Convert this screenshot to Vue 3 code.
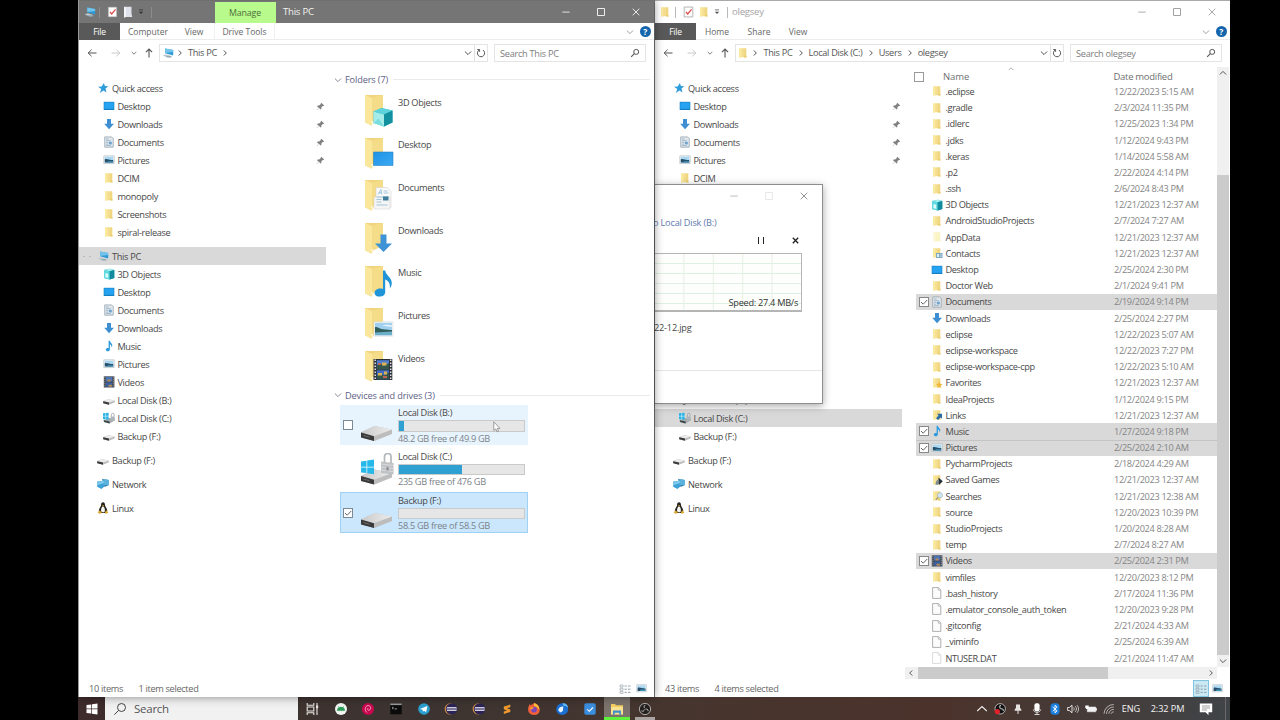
<script setup>
import { h } from 'vue'

const Ic = (p) =>
  h('svg', { 'aria-hidden': 'true' }, [h('use', { href: '#' + p.n, width: '100%', height: '100%' })])
Ic.props = ['n']

const navGroups = [
  [
    { t: 'Quick access', i: 'star', d: 0 },
    { t: 'Desktop', i: 'desktop', d: 1, pin: true },
    { t: 'Downloads', i: 'down', d: 1, pin: true },
    { t: 'Documents', i: 'doc', d: 1, pin: true },
    { t: 'Pictures', i: 'pic', d: 1, pin: true },
    { t: 'DCIM', i: 'folder', d: 1 },
    { t: 'monopoly', i: 'folder', d: 1 },
    { t: 'Screenshots', i: 'folder', d: 1 },
    { t: 'spiral-release', i: 'folder', d: 1 }
  ],
  [
    { t: 'This PC', i: 'pc', d: 0 },
    { t: '3D Objects', i: 'cube', d: 1 },
    { t: 'Desktop', i: 'desktop', d: 1 },
    { t: 'Documents', i: 'doc', d: 1 },
    { t: 'Downloads', i: 'down', d: 1 },
    { t: 'Music', i: 'music', d: 1 },
    { t: 'Pictures', i: 'pic', d: 1 },
    { t: 'Videos', i: 'video', d: 1 },
    { t: 'Local Disk (B:)', i: 'disk', d: 1 },
    { t: 'Local Disk (C:)', i: 'diskc', d: 1 },
    { t: 'Backup (F:)', i: 'disk', d: 1 }
  ],
  [{ t: 'Backup (F:)', i: 'disk', d: 0 }],
  [{ t: 'Network', i: 'net', d: 0 }],
  [{ t: 'Linux', i: 'tux', d: 0 }]
]

const windows = [
  {
    id: 'pc', title: 'This PC', active: true, icon: 'pc', quick: 'page',
    tabs: ['Computer', 'View'], crumbs: ['This PC'], search: 'Search This PC',
    selected: 'This PC', count: '10 items', picked: '1 item selected'
  },
  {
    id: 'user', title: 'olegsey', active: false, icon: 'folder', quick: 'folder',
    tabs: ['Home', 'Share', 'View'], crumbs: ['This PC', 'Local Disk (C:)', 'Users', 'olegsey'],
    search: 'Search olegsey', selected: 'Local Disk (C:)', count: '43 items', picked: '4 items selected'
  }
]

const folders = [
  ['3D Objects', 'b-cube'], ['Desktop', 'b-desktop'], ['Documents', 'b-doc'], ['Downloads', 'b-down'],
  ['Music', 'b-music'], ['Pictures', 'b-pic'], ['Videos', 'b-video']
]

const drives = [
  { t: 'Local Disk (B:)', s: '48.2 GB free of 49.9 GB', used: 4, i: 'b-disk', state: 'hover' },
  { t: 'Local Disk (C:)', s: '235 GB free of 476 GB', used: 50.6, i: 'b-diskc', state: '' },
  { t: 'Backup (F:)', s: '58.5 GB free of 58.5 GB', used: 0, i: 'b-disk', state: 'sel' }
]

const files = [
  ['.eclipse', 'folder', '12/22/2023 5:15 AM'],
  ['.gradle', 'folder', '2/3/2024 11:35 PM'],
  ['.idlerc', 'folder', '12/25/2023 1:34 PM'],
  ['.jdks', 'folder', '1/12/2024 9:43 PM'],
  ['.keras', 'folder', '1/14/2024 5:58 AM'],
  ['.p2', 'folder', '2/22/2024 4:14 PM'],
  ['.ssh', 'folder', '2/6/2024 8:43 PM'],
  ['3D Objects', 'cube', '12/21/2023 12:37 AM'],
  ['AndroidStudioProjects', 'folder', '2/7/2024 7:27 AM'],
  ['AppData', 'faded', '12/21/2023 12:37 AM'],
  ['Contacts', 'contacts', '12/21/2023 12:37 AM'],
  ['Desktop', 'desktop', '2/25/2024 2:30 PM'],
  ['Doctor Web', 'folder', '2/1/2024 9:41 PM'],
  ['Documents', 'doc', '2/19/2024 9:14 PM', true],
  ['Downloads', 'down', '2/25/2024 2:27 PM'],
  ['eclipse', 'folder', '12/22/2023 5:07 AM'],
  ['eclipse-workspace', 'folder', '12/22/2023 7:27 PM'],
  ['eclipse-workspace-cpp', 'folder', '12/22/2023 5:10 AM'],
  ['Favorites', 'fav', '12/21/2023 12:37 AM'],
  ['IdeaProjects', 'folder', '1/12/2024 9:15 PM'],
  ['Links', 'links', '12/21/2023 12:37 AM'],
  ['Music', 'music', '1/27/2024 9:18 PM', true],
  ['Pictures', 'pic', '2/25/2024 2:10 AM', true],
  ['PycharmProjects', 'folder', '2/18/2024 4:29 AM'],
  ['Saved Games', 'games', '12/21/2023 12:37 AM'],
  ['Searches', 'searches', '12/21/2023 12:38 AM'],
  ['source', 'folder', '12/20/2023 10:39 PM'],
  ['StudioProjects', 'folder', '1/20/2024 8:28 AM'],
  ['temp', 'folder', '2/7/2024 8:27 AM'],
  ['Videos', 'video', '2/25/2024 2:31 PM', true],
  ['vimfiles', 'folder', '12/20/2023 8:12 PM'],
  ['.bash_history', 'file', '2/17/2024 11:36 PM'],
  ['.emulator_console_auth_token', 'file', '12/20/2023 9:28 PM'],
  ['.gitconfig', 'file', '2/21/2024 4:33 AM'],
  ['_viminfo', 'file', '2/25/2024 6:39 AM'],
  ['NTUSER.DAT', 'filef', '2/21/2024 11:47 AM']
]

const apps = ['taskview', 'android', 'debian', 'cmd', 'telegram', 'ecl', 'ecl', 'sublime', 'firefox', 'thunder', 'todo', 'explorer', 'obs']
const tray = ['t-up', 't-obs', 't-usb', 't-mic', 't-bt', 't-snd', 't-bat', 't-wifi']
</script>

<template>
  <div class="screen">
    <svg class="defs" width="0" height="0">
      <defs>
        <linearGradient id="gf" x1="0" x2="1"><stop offset="0" stop-color="#f9e9a6" /><stop offset="1" stop-color="#eed177" /></linearGradient>
        <linearGradient id="gb" x1="0" y1="0" x2="1" y2="1"><stop offset="0" stop-color="#1f92e4" /><stop offset="1" stop-color="#3ba9f4" /></linearGradient>
        <linearGradient id="gd" x1="0" x2="1"><stop offset="0" stop-color="#c9c9c9" /><stop offset="1" stop-color="#ededed" /></linearGradient>
      </defs>
      <symbol id="folder" viewBox="0 0 12 12"><path d="M2 1.2h7.3v7.3l.6 1.8H4.2L2 10.8z" fill="url(#gf)" /><path d="M2 1.2l2.1.9v8.7L2 10z" fill="#fbe99c" /><path d="M7.6 8.6l2.2 1.8H7.2z" fill="#e9c75f" /></symbol>
      <symbol id="faded" viewBox="0 0 12 12"><path d="M2 1.2h7.3v7.3l.6 1.8H4.2L2 10.8z" fill="#faf3c4" /><path d="M2 1.2l2.1.9v8.7L2 10z" fill="#fdf8dc" /></symbol>
      <symbol id="contacts" viewBox="0 0 12 12"><use href="#folder" /><path d="M5 6h6.5v5H5z" fill="#7fa9c2" /><path d="M6 7h2v3H6zM9 7.6h1.8v.6H9zM9 9h1.8v.6H9z" fill="#dff0f6" /></symbol>
      <symbol id="fav" viewBox="0 0 12 12"><use href="#folder" /><path d="M8.2 4.6l1 2.1 2.4.2-1.8 1.6.5 2.4-2.1-1.3-2.1 1.3.6-2.4-1.8-1.6 2.3-.2z" fill="#efb83a" /></symbol>
      <symbol id="links" viewBox="0 0 12 12"><use href="#folder" /><path d="M6 4.8h5v5L9.5 8.4 7 11 5 9.2l2.6-2.6z" fill="#2c6ca4" /></symbol>
      <symbol id="games" viewBox="0 0 12 12"><use href="#folder" /><path d="M7.5 3.5l4.3 3.8-3.6 3.4-1-2z" fill="#263036" /><path d="M4.5 10.8c0-3 1-5 3.2-5.3l.5 1.5-1 3.8z" fill="#7d8b93" /></symbol>
      <symbol id="searches" viewBox="0 0 12 12"><use href="#folder" /><circle cx="9" cy="5.3" r="2.6" fill="#cfe6f2" stroke="#a3b9c4" stroke-width=".7" /><path d="M7 7.3L4.8 9.8" stroke="#9a8f78" stroke-width="1.1" /></symbol>
      <symbol id="file" viewBox="0 0 12 12"><path d="M1.6.6h5.8l2.4 2.4v8.4H1.6z" fill="#fcfcfc" stroke="#9a9a9a" stroke-width=".8" /><path d="M7.2.8v2.4h2.4" fill="none" stroke="#9a9a9a" stroke-width=".6" /></symbol>
      <symbol id="filef" viewBox="0 0 12 12"><path d="M1.6.6h5.8l2.4 2.4v8.4H1.6z" fill="#fff" stroke="#d0d0d0" stroke-width=".8" /><path d="M7.2.8v2.4h2.4" fill="none" stroke="#d0d0d0" stroke-width=".6" /></symbol>
      <symbol id="star" viewBox="0 0 12 12"><path d="M6.9.9l1 3.2 3.4.2-2.8 2.1.9 4-2.9-2-3.7 2.6 1.5-4.1L1 4.8l3.7-.3z" fill="#2f9cdb" /></symbol>
      <symbol id="desktop" viewBox="0 0 12 12"><path d="M.7 1.8h10.6v8.2H.7z" fill="#1580c4" /><path d="M1.3 2.4h9.4v6.400H1.3z" fill="#25a3f2" /></symbol>
      <symbol id="down" viewBox="0 0 12 12"><path d="M4 .9h4v4.8h3L6 11.2 1.2 5.7H4z" fill="#3d8fd1" /></symbol>
      <symbol id="doc" viewBox="0 0 12 12"><path d="M1.7.9h7l1.6 1.6v8.7H1.7z" fill="#dfe6ec" stroke="#9aa7b1" stroke-width=".8" /><path d="M3 3h2.6M3 4.7h5M3 6.4h2M3 8.2h2M3 9.6h5" stroke="#8fabc0" stroke-width=".7" /><path d="M5.8 5.8h3v2.6h-3z" fill="#6fa5cc" /></symbol>
      <symbol id="pic" viewBox="0 0 12 12"><path d="M.8 1.8h10.4v7.8H.8z" fill="#eef4f8" stroke="#aab6be" stroke-width=".6" /><path d="M1.8 2.8h8.4v5.8H1.8z" fill="#a9d6f0" /><path d="M1.8 5.3c2-1 4 .8 8.4.8v2.5H1.8z" fill="#28506b" /><path d="M5 7.2h5.2v1.4H4z" fill="#3f92b8" /></symbol>
      <symbol id="video" viewBox="0 0 12 12"><path d="M.8.3h10.6v11.2H.8z" fill="#424852" /><path d="M3 1h6.2v4.4H3z" fill="#4c74b8" /><path d="M3 6.4h6.2v4.4H3z" fill="#3b5fa3" /><path d="M4.5 3.4h3.2v2H4.5zM5.5 8.8h3.4v2H5.5z" fill="#b28a52" /><path d="M1.9.8v10.4M10.3.8v10.4" stroke="#a6acb4" stroke-width=".9" stroke-dasharray="1 1" /></symbol>
      <symbol id="music" viewBox="0 0 12 12"><path d="M5.6.7h1.2c.2 2 2.6 2.4 2.5 4.6 0 1-.5 1.7-1 2.2.5-1.7-.3-2.8-1.4-3.2v4.9c0 1.2-1 2.1-2.2 2.1-1.1 0-1.9-.6-1.9-1.5 0-1.3 1.5-2 2.8-1.6z" fill="#2b9ade" /></symbol>
      <symbol id="cube" viewBox="0 0 12 12"><path d="M1 2l6-1.2L11.3 2v8L6.700 11.400 1 10z" fill="#1fb4c4" /><path d="M1 2l5.700 1.200v8.200L1 10z" fill="#5fdbe0" /><path d="M1 2l6-1.200L11.300 2 6.700 3.200z" fill="#a6f0ef" /><path d="M2.400 5.200l2.800.6v4l-2.800-.6z" fill="#e0fbfa" /><path d="M6.700 3.200L11.300 2v8l-4.600 1.400z" fill="#138a9d" /></symbol>
      <symbol id="pc" viewBox="0 0 12 12"><path d="M3.2 1.4l8 1.600v5.400l-8-2.200z" fill="#2b9bd8" /><path d="M3.2 1.4l8 1.600v2l-8 1z" fill="#74c4ea" /><path d="M.6 8.600l3.200-1.300 5.600 1.800-3.400 1.300z" fill="#bfcbd2" /><path d="M3 9.400l2.800 1h3.600V9z" fill="#8fa3b0" /></symbol>
      <symbol id="disk" viewBox="0 0 12 12"><path d="M.2 7l5.200-1.700 6.400 1.200v1.700L6 10.700.2 9.300z" fill="#bdbdbd" /><path d="M.2 7l5.200-1.700 6.400 1.200-5.800 2z" fill="#ebebeb" /><path d="M.2 7.200l5.800 1.400v2.100L.2 9.300z" fill="#3b3b3b" /></symbol>
      <symbol id="diskc" viewBox="0 0 12 12"><path d="M.2 8l6.200-2 5.400.6v2L6.400 11.400.8 9.800z" fill="#a4acb0" /><path d="M1 8.200l5.600 1.200v2L1 10z" fill="#3c4448" /><path d="M0 1.200l5.600-.4v7L0 7z" fill="#28b3e4" /><path d="M2.700 1v6.600M0 4.200h5.600" stroke="#fff" stroke-width=".5" /><path d="M7.600 4.500h4v4.300h-4z" fill="#aeb4b8" /><path d="M8.400 4.600V2.600c0-1.800 2.700-1.800 2.700 0v2" fill="none" stroke="#9a9fa3" stroke-width=".8" /></symbol>
      <symbol id="net" viewBox="0 0 12 12"><path d="M5 1l6.600 1v5.200L7.600 9z" fill="#2f7fb5" /><circle cx="9" cy="4.300" r="3" fill="#59b2dc" /><path d="M.2 3.600L7 2.800v6L4.500 11 .2 8.800z" fill="#3da0d6" /><path d="M.2 3.600L7 2.800v2.400l-6.800 2z" fill="#7cc7ea" /></symbol>
      <symbol id="tux" viewBox="0 0 12 12"><path d="M6 .3c1.500 0 2 1.200 2 2.800 0 1.500 2.400 3.500 2.300 6L8.500 11H3.600L1.800 9c0-2.500 2.300-4.300 2.300-6C4 1.400 4.600.3 6 .3z" fill="#26241f" /><path d="M6 4.200c1.400.8 2.300 2.600 1.700 5.500L6 10.600l-1.800-1C3.600 7 4.600 5 6 4.200z" fill="#f6f4ee" /><path d="M5 3h2l-1 1.300zM1 10l1.800-1.700 2 2.500-1.400.9L.9 11zM11 10L9.300 8.300l-1.600 2.500 1 .9L11 11z" fill="#d9a92e" /></symbol>
      <symbol id="check" viewBox="0 0 12 12"><path d="M1.300.6h9.400v10.800H1.300z" fill="#fff" stroke="#8d8d8d" stroke-width=".7" /><path d="M3.300 6l1.900 2.200L9.300 3.200" fill="none" stroke="#dc4b4b" stroke-width="1.400" /></symbol>
      <symbol id="page" viewBox="0 0 12 12"><path d="M2 .8h7.500v7l.8 3.200H4.500L2 11.500z" fill="#dfe2ea" /><path d="M2 .8l2 1v9L2 11.500z" fill="#f4f5f9" /></symbol>
      <symbol id="qdd" viewBox="0 0 6 6"><path d="M1 .9h4" stroke="currentColor" stroke-width=".8" /><path d="M.8 2.700h4.400L3 5z" fill="currentColor" /></symbol>
      <symbol id="pin" viewBox="0 0 8 8"><path d="M4.700.7l2.600 2.500-.8.400-.5-.1-1.300 1.400.1 1.300-.7.500-1.600-1.500L.9 7l-.2-.2 1.600-1.700L.9 3.700l.6-.6 1.300.1 1.500-1.400-.1-.5z" fill="#808080" /></symbol>
      <symbol id="chev-d" viewBox="0 0 8 8"><path d="M.9 2.500L4 5.600l3.100-3.100" fill="none" stroke="currentColor" stroke-width="1" /></symbol>
      <symbol id="chev-r" viewBox="0 0 8 8"><path d="M2.800 1.500L5.300 4 2.800 6.500" fill="none" stroke="currentColor" stroke-width="1" /></symbol>
      <symbol id="back" viewBox="0 0 10 10"><path d="M9.500 5H1M4.600 1.700L1.200 5l3.400 3.300" fill="none" stroke="currentColor" stroke-width="1" /></symbol>
      <symbol id="fwd" viewBox="0 0 10 10"><path d="M.5 5H9M5.400 1.700L8.800 5 5.400 8.300" fill="none" stroke="currentColor" stroke-width="1" /></symbol>
      <symbol id="up" viewBox="0 0 10 10"><path d="M5 9.600V1M1.900 4.200L5 1.100l3.100 3.100" fill="none" stroke="currentColor" stroke-width="1.100" /></symbol>
      <symbol id="refresh" viewBox="0 0 10 10"><path d="M3.200 2A3.600 3.600 0 1 0 7 2.100" fill="none" stroke="currentColor" stroke-width="1" /><path d="M1.400 1.500h2.200v2.300" fill="none" stroke="currentColor" stroke-width="1" /></symbol>
      <symbol id="mag" viewBox="0 0 10 10"><circle cx="6.200" cy="3.900" r="2.500" fill="none" stroke="currentColor" stroke-width="1" /><path d="M4.300 5.700L1.200 8.800" stroke="currentColor" stroke-width="1.100" /></symbol>
      <symbol id="magthin" viewBox="0 0 14 14"><circle cx="8.500" cy="5.500" r="4" fill="none" stroke="currentColor" stroke-width="1" /><path d="M5.600 8.400L1.300 12.700" stroke="currentColor" stroke-width="1" /></symbol>
      <symbol id="w-min" viewBox="0 0 10 10"><path d="M1.300 5.100h7.400" stroke="currentColor" stroke-width=".9" /></symbol>
      <symbol id="w-max" viewBox="0 0 10 10"><path d="M1.500 1.500h7v7h-7z" fill="none" stroke="currentColor" stroke-width="1" /></symbol>
      <symbol id="w-x" viewBox="0 0 10 10"><path d="M1.700 1.700l6.600 6.600M8.300 1.700L1.700 8.300" stroke="currentColor" stroke-width=".95" /></symbol>
      <symbol id="stopx" viewBox="0 0 10 10"><path d="M2 2l6 6M8 2L2 8" stroke="currentColor" stroke-width="1.500" /></symbol>
      <symbol id="tick" viewBox="0 0 10 10"><path d="M2 5l2.200 2.200L8.200 3" fill="none" stroke="#555" stroke-width=".9" /></symbol>
      <symbol id="v-list" viewBox="0 0 12 10"><path d="M1 1h3v2H1zM1 4.200h3v2H1zM1 7.400h3v2H1z" fill="none" stroke="#8c979f" stroke-width=".6" /><path d="M5.500 2h2.300M9 2h2.500M5.500 5.200h2.300M9 5.200h2.500M5.500 8.400h2.300M9 8.400h2.500" stroke="#8c979f" stroke-width=".9" /></symbol>

      <symbol id="b-folder" viewBox="0 0 30 34"><path d="M1 1h18v22.500L10 28l-3 3.500L1 28z" fill="#f0d57d" /><path d="M1 1l7 3v27.800L1 28.500z" fill="#fae79c" /><path d="M8 3.500L19 1v22.500L8 28z" fill="#f5dc88" /><path d="M7 27l1.500 4.600L9.500 27z" fill="#fff6cf" /></symbol>
      <symbol id="b-cube" viewBox="0 0 30 34"><use href="#b-folder" /><path d="M9.500 17.500l8-3.500 11 2.500v12L20 32.500 9.500 29z" fill="#2bbcc8" /><path d="M9.500 17.500L20 20.500v12L9.500 29z" fill="#a5ece9" /><path d="M9.500 17.500l8-3.500 11 2.500-8.500 4z" fill="#5fd3dc" /><path d="M20 20.500l8.500-4v12l-8.500 4z" fill="#13909f" /><path d="M9.500 29l5-4.500 5.500 8z" fill="#7bdede" /></symbol>
      <symbol id="b-desktop" viewBox="0 0 30 34"><use href="#b-folder" /><path d="M9.500 15h19.500v13.500H9.500z" fill="url(#gb)" stroke="#2b83c4" stroke-width=".6" /></symbol>
      <symbol id="b-doc" viewBox="0 0 30 34"><use href="#b-folder" /><path d="M12 8.500h11l4 3.500v16.500H12z" fill="#fafafa" stroke="#cccccc" stroke-width=".5" /><path d="M10 18h16v12H10z" fill="#f5f5f5" stroke="#d2d2d2" stroke-width=".5" /><path d="M14 15.500l3-5 .7 5M14.800 13.800h2.500M19.500 12h4M19.500 14h5M12.500 18h12M12.500 20.500h5M12.500 23h5M12.500 26h11" fill="none" stroke="#91b9d3" stroke-width=".8" /><path d="M19 17.500h5.500v4H19z" fill="#3f7f9d" /></symbol>
      <symbol id="b-down" viewBox="0 0 30 34"><use href="#b-folder" /><path d="M16.500 12.500h6v9h5.500l-8.500 8.500-8.500-8.500h5.500z" fill="#3e93d6" /></symbol>
      <symbol id="b-music" viewBox="0 0 30 34"><use href="#b-folder" /><path d="M19 5.500h2.200c.5 5 6.500 6.500 6.600 12.500 0 2.300-.8 4-2 5.500.8-5-1.600-8-4.600-9V27c0 3-2.600 4.600-5.600 4.600-2.900 0-5-1.400-5-3.700 0-3.200 4.300-5.200 8.400-3.900z" fill="#1f94d8" /></symbol>
      <symbol id="b-pic" viewBox="0 0 30 34"><use href="#b-folder" /><path d="M10 14.800h19v14.400H10z" fill="#fafafa" stroke="#c7c7c7" stroke-width=".4" /><path d="M11 15.800h17v12.400H11z" fill="#9fd0f0" /><path d="M11 20.300c2-1 4 1.400 8 2 4 .6 7 .5 9 .8v3H11z" fill="#315f5b" /><path d="M11 25.500l17-1v3.700H11z" fill="#6daecb" /><path d="M18 19c3-1.500 7-1.500 10-.6v1.500c-4-1-7-.5-10-.9z" fill="#e8f4fa" /></symbol>
      <symbol id="b-video" viewBox="0 0 30 34"><use href="#b-folder" /><path d="M9.500 9h18.800v21H9.500z" fill="#2d3138" /><path d="M12.800 10.200h12.200v9H12.800z" fill="#4f7dd0" /><path d="M12.800 20.300h12.200v9H12.800z" fill="#3f6cc0" /><path d="M13 15l5-1 2 2 5-3v6.200H13zM13 25.500l4-2 3 2 5-3v6.800H13z" fill="#35564a" /><path d="M18 12.500h4.500v3H18zM14 23h4v2.500h-4zM20 21.500h3v3h-3z" fill="#ddb14e" /><path d="M14 13h3v2h-3zM19 26h4v2h-4z" fill="#c06552" /><path d="M11.200 9.500v20.500M26.700 9.500v20.500" stroke="#e2e4e8" stroke-width="1.500" stroke-dasharray="1.500 1.500" /></symbol>
      <symbol id="b-disk" viewBox="0 0 34 32"><path d="M1 17.500L14.500 11 32 14.500v4.500L14.500 26 1 22.500z" fill="#bdbdbd" /><path d="M1 17.500L14.500 11 32 14.500 14 21.200z" fill="url(#gd)" /><path d="M1 17.500l13 3.700V26L1 22.500z" fill="#3a3a3a" /><path d="M3.500 20.500l6 1.700" stroke="#6b6b6b" stroke-width="1" /></symbol>
      <symbol id="b-diskc" viewBox="0 0 34 32"><g transform="translate(0 5.500)"><use href="#b-disk" width="34" height="32" /></g><path d="M1 8.500l5.500-.8v6H1zM7.200 7.600L14 6.500v7.200H7.200zM1 14.500h5.500v5.600L1 19.400zM7.200 14.500H14v6.700l-6.800-1z" fill="#27b8ea" /><path d="M24.500 9V3.500c0-4 6.500-4 6.500 0V11" fill="none" stroke="#b4b7b9" stroke-width="1.700" /><path d="M21 8.500L33.500 10v11.500L21 20z" fill="#bfc2c4" /><path d="M21 11l12.500 1.500M21 14l12.500 1.500M21 17l12.500 1.500" stroke="#d9dbdc" stroke-width=".9" /><path d="M26.500 14h2v3.500h-2z" fill="#8a8a8a" /></symbol>

      <symbol id="taskview" viewBox="0 0 14 14"><path d="M1.200 1v2.300h6.600V1M1.200 13v-2.300h6.600V13M1.200 5h6.600v4H1.200zM11 1v12" fill="none" stroke="#e9e5e3" stroke-width="1.100" /><path d="M10 3.500h2.200v2.700H10z" fill="#e9e5e3" /></symbol>
      <symbol id="android" viewBox="0 0 14 14"><circle cx="7" cy="7" r="6" fill="#f3f6f3" /><path d="M3.300 8.600a3.700 3.500 0 0 1 7.400 0zM4.200 4.200l1 1.500M9.800 4.200l-1 1.500" fill="#2c9b55" stroke="#2c9b55" stroke-width=".6" /></symbol>
      <symbol id="debian" viewBox="0 0 14 14"><circle cx="7" cy="7" r="6.100" fill="#c8084e" /><path d="M6 10.500C3.500 8.500 3.600 4 7 3.600c2.700-.2 3.600 3.300 1.500 4.400C7 8.700 5.800 7 7 6.200" fill="none" stroke="#f5b8cd" stroke-width=".9" /></symbol>
      <symbol id="cmd" viewBox="0 0 14 14"><path d="M1.300 1.800h11.400v10.500H1.300z" fill="#0b0b0b" /><path d="M1.300 1.500h11.400v1.600H1.300z" fill="#9b9b9b" /><path d="M3 5l1.500 1L3 7M5.500 6.900H8" stroke="#cfcfcf" stroke-width=".7" fill="none" /></symbol>
      <symbol id="telegram" viewBox="0 0 14 14"><circle cx="7" cy="7" r="5.800" fill="#2a9fcf" /><path d="M2.900 6.900L10.400 4l-1.300 6.300-2-1.500-1.200 1-.3-2z" fill="#fff" /></symbol>
      <symbol id="ecl" viewBox="0 0 14 14"><circle cx="6.300" cy="7" r="5.700" fill="#c98a46" /><circle cx="7.600" cy="7" r="5.700" fill="#2c2455" /><path d="M3 5.500h9.500M2.600 7h10.400M3 8.500h9.500" stroke="#cfcce0" stroke-width="1.100" /></symbol>
      <symbol id="sublime" viewBox="0 0 14 14"><path d="M1.500 1h11v12h-11z" fill="#3b3532" /><path d="M3.800 4.600L10.300 2.600v2.600L7 6.300l3.300 1.200v2.500l-6.500 2V9.400L7 8.400 3.800 7.200z" fill="#f0982c" /></symbol>
      <symbol id="firefox" viewBox="0 0 14 14"><path d="M7 1.200c1.500-.7 1.600.3 3.400 1.200C14 5.500 13.800 13 7.200 13 1 13 .1 7.200 2 3.500l.6-1.600.9 1.400z" fill="#f3603a" /><path d="M7 1c3 1 5.500 3.500 5.200 6.800C10.800 5.500 9 4 7 4.200z" fill="#f9c338" /><circle cx="7" cy="7.600" r="2.900" fill="#7a48b8" /><path d="M2.600 6c1.600-1.400 3.600-1 4.500.2-1.600.2-2 .9-3 1.500z" fill="#fb9a35" /></symbol>
      <symbol id="thunder" viewBox="0 0 14 14"><circle cx="7.200" cy="7.200" r="5.900" fill="#1b6fd2" /><path d="M3.300 8.500c0-2.500 2.200-4.200 5-4l-.4 4.500-2.400 1.500z" fill="#e8f3fc" /><path d="M7.500 1.300c3.500-.8 5.600 2 5.600 4.700-1-1.700-3-2.200-4.600-2z" fill="#5fb8f5" /></symbol>
      <symbol id="todo" viewBox="0 0 14 14"><rect x="1.300" y="1.300" width="11.400" height="11.400" rx="1.800" fill="#3b8ede" /><path d="M4.300 7.400L6.300 9.300 9.900 5.500" fill="none" stroke="#fff" stroke-width="1.100" /></symbol>
      <symbol id="explorer" viewBox="0 0 14 14"><path d="M1 2h4l1 1.300h7v9H1z" fill="#f4cf61" /><path d="M1 5h12v7.500H1z" fill="#fbe293" /><path d="M3 12.800V8.500h8v4.300H9.300v-2H4.700v2z" fill="#3d8ec9" /></symbol>
      <symbol id="obs" viewBox="0 0 14 14"><circle cx="7" cy="7" r="5.600" fill="#22201f" stroke="#cfcccb" stroke-width=".8" /><path d="M7 6.200c-1.400-.8-1.200-2.700.3-3M7.600 7.300c1.400-.7 2.900.5 2.400 1.900M6.300 7.500c-.1 1.600-1.700 2.300-2.800 1.400" fill="none" stroke="#c9c6c5" stroke-width="1" /></symbol>
      <symbol id="win" viewBox="0 0 12 12"><path d="M.5 2.100L5.300 1.400v4.200H.5zM6 1.300L11.500.5v5.100H6zM.5 6.300h4.800v4.300l-4.800-.7zM6 6.300h5.500v5.200L6 10.700z" fill="#fff" /></symbol>
      <symbol id="t-up" viewBox="0 0 12 12"><path d="M1.200 8L6 3.600 10.800 8" fill="none" stroke="#eee" stroke-width="1.100" /></symbol>
      <symbol id="t-obs" viewBox="0 0 12 12"><circle cx="6.200" cy="5.800" r="5.200" fill="#111" stroke="#d0d0d0" stroke-width=".8" /><path d="M6.500 5.500c-1.300-1-.8-3 .4-3.300M6.700 6c1.500-.7 3 .5 2.600 2" fill="none" stroke="#ccc" stroke-width="1.100" /><circle cx="3.300" cy="8.600" r="2.600" fill="#e0202a" /></symbol>
      <symbol id="t-usb" viewBox="0 0 12 12"><path d="M4 1.500h4v3.300l1.300 1.700v1.300H6.500V11h-1V7.800H2.700V6.500L4 4.800z" fill="#e6e3e1" /></symbol>
      <symbol id="t-mic" viewBox="0 0 12 12"><rect x="3.400" y=".2" width="5.200" height="8" rx="2" fill="#fff" /><path d="M2.300 6.500c.3 3.600 7.100 3.600 7.400 0M6 9v2.300M3.500 11.500h5" fill="none" stroke="#e8e8e8" stroke-width=".9" /></symbol>
      <symbol id="t-bt" viewBox="0 0 12 12"><rect x="1.500" y=".2" width="9" height="11.600" rx="3.500" fill="#1b7fe0" /><path d="M3.700 3.900l4.400 4L6 9.800V2.200l2.100 1.900-4.400 4" fill="none" stroke="#fff" stroke-width=".9" /></symbol>
      <symbol id="t-snd" viewBox="0 0 12 12"><path d="M.6 4.500h1.700L5 2.200v7.600L2.300 7.500H.6z" fill="none" stroke="#eee" stroke-width=".9" /><path d="M6.600 4.400c.8 1 .8 2.200 0 3.200M8.300 3.200c1.500 1.700 1.500 3.900 0 5.600M10 2.200c2 2.300 2 5.300 0 7.600" fill="none" stroke="#ddd" stroke-width=".8" /></symbol>
      <symbol id="t-bat" viewBox="0 0 12 12"><path d="M2.300 4h8.500v4.800H2.300zM10.800 5.500h1v1.800h-1z" fill="#f1f1f1" stroke="#eee" stroke-width=".5" /><path d="M.3 2.600h3.400v2.200L2.600 6H1.400L.3 4.800z" fill="#fff" /></symbol>
      <symbol id="t-wifi" viewBox="0 0 12 12"><path d="M1 10.800A9.600 9.600 0 0 1 10.800 1.500M3.400 10.800a7.200 7.200 0 0 1 7.400-6.800M5.800 10.800a4.800 4.800 0 0 1 5-4.400M8.200 10.800a2.500 2.500 0 0 1 2.600-2" fill="none" stroke="#bdb9b7" stroke-width=".9" /></symbol>
      <symbol id="t-note" viewBox="0 0 14 14"><path d="M.8 1.500h12.400v8.800H9.500v3L6.600 10.300H.8z" fill="#fff" /><path d="M3 4h8M3 6h8M3 8h5" stroke="#777" stroke-width=".7" /></symbol>
      <symbol id="cursor" viewBox="0 0 8 12"><path d="M.8.8v8.800l2-1.700 1.200 3 1.500-.6-1.200-2.900h2.600z" fill="#fff" stroke="#777" stroke-width=".7" /></symbol>
    </svg>

    <div class="desktop">
      <div class="windows">
        <section v-for="w in windows" :key="w.id" class="win" :class="[w.id, { active: w.active }]">
          <header class="title">
            <Ic :n="w.icon" class="q-app" /><i class="q-sep" />
            <Ic n="check" class="q-check" /><Ic :n="w.quick" class="q-page" /><Ic n="qdd" class="q-dd" />
            <i class="q-sep2" />
            <span v-if="w.active" class="manage">Manage</span>
            <span class="t-name">{{ w.title }}</span>
            <div class="caps">
              <span><Ic n="w-min" class="cap" /></span><span><Ic n="w-max" class="cap" /></span><span><Ic n="w-x" class="cap" /></span>
            </div>
          </header>
          <div class="ribbon">
            <span class="file">File</span>
            <span v-for="t in w.tabs" :key="t" class="tab" :class="t.toLowerCase()">{{ t }}</span>
            <span v-if="w.active" class="tools">Drive Tools</span>
            <div class="r-end"><Ic n="chev-d" class="c8" /><b class="help">?</b></div>
          </div>
          <div class="address">
            <Ic n="back" class="a-back" /><Ic n="fwd" class="a-fwd" /><Ic n="chev-d" class="a-dd" /><Ic n="up" class="a-up" />
            <div class="path">
              <Ic :n="w.icon" class="p-ic" />
              <Ic n="chev-r" class="p-ch p-first" />
              <template v-for="(c, k) in w.crumbs" :key="c">
                <span>{{ c }}</span>
                <Ic v-if="w.active || k < w.crumbs.length - 1" n="chev-r" class="p-ch" />
              </template>
              <div class="p-end"><Ic n="chev-d" class="c8" /><span class="ref"><Ic n="refresh" class="c10" /></span></div>
            </div>
            <div class="find"><span>{{ w.search }}</span><Ic n="mag" class="c10" /></div>
          </div>

          <div class="body">
            <nav>
              <div v-for="(g, gi) in navGroups" :key="gi" class="group">
                <div v-for="n in g" :key="n.t" class="nrow" :class="['d' + n.d, { on: n.t === w.selected }]">
                  <i v-if="n.t === w.selected && w.active" class="ghost" />
                  <Ic :n="n.i" class="i12" /><span>{{ n.t }}</span><Ic v-if="n.pin" n="pin" class="pin" />
                </div>
              </div>
            </nav>

            <main v-if="w.active" class="tiles">
              <h2><Ic n="chev-d" class="c8" /><span>Folders (7)</span><i /></h2>
              <div v-for="f in folders" :key="f[0]" class="fitem"><Ic :n="f[1]" class="fic" /><span>{{ f[0] }}</span></div>
              <h2><Ic n="chev-d" class="c8" /><span>Devices and drives (3)</span><i /></h2>
              <div v-for="d in drives" :key="d.t" class="drive" :class="d.state">
                <span class="cb"><Ic v-if="d.state === 'sel'" n="tick" class="c10" /></span>
                <Ic :n="d.i" class="dic" :class="d.i" />
                <div class="dinfo">
                  <span class="dn">{{ d.t }}</span>
                  <div class="bar"><i :style="{ width: d.used + '%' }" /></div>
                  <span class="ds">{{ d.s }}</span>
                </div>
                <Ic v-if="d.state === 'hover'" n="cursor" class="cursor" />
              </div>
            </main>

            <main v-else class="list">
              <div class="lmain">
                <div class="lhead">
                  <span class="cb" /><span class="hn">Name</span><span class="hd">Date modified</span>
                  <Ic n="chev-d" class="sort" />
                </div>
                <div v-for="f in files" :key="f[0]" class="frow" :class="{ on: f[3] }">
                  <span class="cbx"><Ic v-if="f[3]" n="tick" class="c10" /></span>
                  <Ic :n="f[1]" class="i12" /><span class="fn">{{ f[0] }}</span><span class="fd">{{ f[2] }}</span>
                </div>
                <div class="hs"><Ic n="chev-r" class="c8 flip" /><div class="htrack"><i /></div><Ic n="chev-r" class="c8" /></div>
              </div>
              <div class="vs"><Ic n="chev-d" class="c8 flipv" /><div class="vtrack"><i /></div><Ic n="chev-d" class="c8" /></div>
            </main>
          </div>

          <footer>
            <span class="cnt">{{ w.count }}</span><span>{{ w.picked }}</span>
            <div class="views"><span class="v"><Ic n="v-list" class="vl" /></span><span class="v2"><Ic n="pic" class="vp" /></span></div>
          </footer>

          <aside v-if="!w.active" class="dialog">
            <div class="dcaps"><Ic n="w-min" class="cap" /><Ic n="w-max" class="cap dim" /><Ic n="w-x" class="cap dark" /></div>
            <p class="to">o <span>Local Disk (B:)</span></p>
            <div class="ctl"><i class="pause" /><Ic n="stopx" class="stop" /></div>
            <div class="graph"><span>Speed: 27.4 MB/s</span></div>
            <p class="jpg">22-12.jpg</p>
            <div class="dfoot" />
          </aside>
        </section>
      </div>

      <div class="taskbar">
        <span class="start"><Ic n="win" class="i12" /></span>
        <div class="tsearch"><Ic n="magthin" class="tmag" /><span>Search</span></div>
        <span v-for="(a, k) in apps" :key="k" class="app" :class="a"><Ic :n="a" class="i14" /></span>
        <div class="tray">
          <span v-for="t in tray" :key="t" class="ti"><Ic :n="t" class="i12" /></span>
          <span class="eng">ENG</span><span class="clock">2:32 PM</span>
          <Ic n="t-note" class="note" /><i class="peek" />
        </div>
      </div>
    </div>
  </div>
</template>

<style>
body { background: #000; overflow: hidden; }
</style>

<style scoped>
* { box-sizing: border-box; }
svg { display: block; flex: none; overflow: visible; }
.defs { position: absolute; }
.screen { width: 1280px; height: 720px; background: #000; padding-left: 78px; font: 9.2px/16px "Open Sans", "Noto Sans", sans-serif; letter-spacing: -0.32px; color: #484848; overflow: hidden; white-space: nowrap; }
.desktop { width: 1152px; height: 720px; display: flex; flex-direction: column; overflow: hidden; }
.windows { display: flex; height: 697px; }
.win { position: relative; width: 576px; height: 697px; background: #fff; border-left: 1px solid #8b8b8b; display: flex; flex-direction: column; }
.win.active { z-index: 2; box-shadow: 0 0 9px rgba(0, 0, 0, .45); }
.user { border-left-color: #777; }
.pc { border-left-color: #999; }

.title { height: 23px; display: flex; align-items: center; background: #fff; color: #a5a5a5; border-top: 1px solid #a9a9a9; }
.active .title { background: #757575; color: #f2f2f2; border-top-color: #6f6f6f; }
.q-app { width: 12px; height: 12px; margin-left: 4px; }
.active .q-app { margin-left: 5px; }
.q-sep, .q-sep2 { width: 1px; height: 11px; background: #b9b9b9; }
.active .q-sep, .active .q-sep2 { background: #8d8d8d; }
.q-sep { margin-left: 4px; }
.active .q-sep { margin-left: 3px; }
.q-check { width: 11px; height: 12px; margin-left: 7px; }
.q-page { width: 12px; height: 12px; margin-left: 4px; }
.q-dd { width: 6px; height: 6px; margin-left: 4px; color: #555; }
.active .q-dd { color: #333; }
.q-sep2 { margin-left: 7px; }
.manage { width: 61px; height: 21px; margin: 1px 0 0 63px; background: #b9fa8c; color: #49703a; text-align: center; line-height: 22px; font-size: 8.800px; letter-spacing: -0.100px; padding-right: 1px; }
.t-name { margin-left: 4px; font-size: 9.600px; letter-spacing: -0.250px; }
.active .t-name { margin-left: 7px; }
.caps { margin-left: auto; display: flex; color: #a3a3a3; padding-right: 1px; }
.active .caps { color: #ececec; }
.caps span { width: 35px; display: flex; justify-content: center; }
.cap { width: 10px; height: 10px; }

.ribbon { height: 17px; display: flex; align-items: center; border-bottom: 1px solid #ececec; font-size: 8.500px; letter-spacing: 0; color: #666; }
.file { width: 41px; height: 17px; background: #595959; color: #fff; text-align: center; line-height: 17px; align-self: flex-start; flex: none; letter-spacing: -0.200px; }
.tab { width: 42px; text-align: center; padding-top: 1px; }
.tab.computer { width: 56px; }
.tab.view { width: 36px; }
.tools { width: 61px; margin-left: 2px; padding-top: 1px; text-align: center; border: solid #f0f0f0; border-width: 0 1px; }
.r-end { margin-left: auto; display: flex; align-items: center; color: #a0a0a0; padding: 1px 3px 0 0; }
.help { margin-left: 6px; width: 11.500px; height: 11.500px; border-radius: 50%; background: #1565ad; color: #fff; font-size: 8.500px; line-height: 11.500px; text-align: center; }
.c8 { width: 8px; height: 8px; }
.c10 { width: 10px; height: 10px; }

.address { height: 27px; display: flex; align-items: center; padding-bottom: 1px; color: #555; }
.a-back { width: 10px; height: 10px; margin-left: 8px; }
.a-fwd { width: 10px; height: 10px; margin-left: 14px; color: #c8c8c8; }
.a-dd { width: 6px; height: 6px; margin-left: 10px; }
.a-up { width: 10px; height: 10px; margin-left: 7px; }
.path { width: 329px; height: 18px; margin-left: 5px; border: 1px solid #e4e4e4; display: flex; align-items: center; }
.p-ic { width: 12px; height: 12px; margin-left: 2px; }
.user .p-ic { margin-left: 1px; }
.p-ch { width: 8px; height: 8px; margin: 0 4px 0 4.200px; }
.p-first { margin-left: 1.500px; margin-right: 4.500px; }
.user .p-first { margin-left: 2px; margin-right: 4.500px; }
.p-end { margin-left: auto; height: 16px; display: flex; align-items: center; }
.ref { width: 13px; height: 16px; margin-left: 2px; border-left: 1px solid #e0e0e0; display: flex; align-items: center; justify-content: center; }
.find { width: 152px; height: 18px; margin-left: 6px; border: 1px solid #e4e4e4; display: flex; align-items: center; justify-content: space-between; padding: 0 5px 0 5px; color: #7d7d7d; letter-spacing: -0.280px; }
.find span { padding-top: 1px; }
.find svg { color: #555; }

.body { height: 613px; display: flex; }
nav { width: 248px; padding-top: 12px; flex: none; }
.group { margin-bottom: 6px; }
.nrow { width: 247px; height: 18px; display: flex; align-items: center; gap: 3px; padding-left: 18px; position: relative; }
.nrow.d1 { padding-left: 24px; }
.nrow.d1 span { margin-left: -.600px; }
.nrow span { padding-top: 1px; }
.nrow.on { background: #d9d9d9; }
.ghost { width: 8px; height: 1px; border-left: 2px solid #bbb; border-right: 2px solid #bbb; margin: 0 3px 0 -14px; }
.i12 { width: 12px; height: 12px; }
.i14 { width: 14px; height: 14px; }
.pin { width: 9px; height: 9px; margin: 0 1.500px 0 auto; }

.tiles { flex: 1; padding: 4px 0 0 7px; }
h2 { margin: 0; height: 17px; font: inherit; letter-spacing: -0.130px; color: #5d6186; display: flex; align-items: center; }
h2 span { padding-top: 1px; }
h2 .c8 { margin-right: 3px; color: #8a8a9a; }
h2 i { flex: 1; height: 1px; background: #eaeaea; margin: 0 4px 0 5px; }
.fitem { height: 42.670px; display: flex; gap: 4px; padding: 6px 0 0 30px; }
.fitem span { padding-top: .700px; }
.fic { width: 30px; height: 34px; }
.drive { position: relative; width: 188px; height: 40.500px; margin: 1.300px 0 3.300px 6px; display: flex; align-items: center; }
.drive + .drive { margin-top: 0; }
.hover { background: #e8f4fd; }
.sel { background: #cbe7fd; border: 1px solid #9fd1f5; margin-left: 6px; }
.cb { width: 10px; height: 10px; border: 1px solid transparent; margin-left: 3px; display: flex; align-items: center; justify-content: center; flex: none; }
.hover .cb, .sel .cb { border-color: #7d8a94; background: #fff; }
.sel .cb { margin-left: 2px; }
.dic { width: 34px; height: 32px; margin-left: 7px; margin-top: 11px; }
.b-diskc { margin-top: 1px; }
.dinfo { width: 127px; margin-left: 4px; display: flex; flex-direction: column; padding-top: .500px; }
.dn, .ds { line-height: 13px; height: 13px; }
.ds { color: #7b8288; }
.bar { height: 11.500px; background: #e6e6e6; border: 1px solid #cacaca; margin: 1px 0 0; display: flex; }
.bar i { background: #2ea0d2; }
.cursor { position: absolute; left: 153px; top: 16px; width: 8px; height: 12px; }

.list { flex: 1; display: flex; padding-left: 2px; min-width: 0; }
.lmain { width: 312px; }
.lhead { position: relative; height: 16.400px; display: flex; align-items: center; font-size: 9.500px; letter-spacing: -0.300px; color: #707070; padding-top: 3px; }
.lhead .cb { border-color: #999; margin-left: 9px; }
.hn { margin-left: 19px; width: 170.500px; letter-spacing: -0.100px; }
.sort { position: absolute; width: 6px; height: 6px; left: 103px; top: -1px; transform: scaleY(-1); color: #999; }
.frow { height: 16.200px; margin-left: 11px; display: flex; align-items: center; }
.frow span { padding-top: 1px; }
.frow.on { background: #d9d9d9; }
.frow.on + .frow.on { box-shadow: inset 0 1px #c4c4c4; }
.frow .cbx { width: 10px; height: 10px; margin: 0 2px 0 3px; flex: none; padding: 0; }
.on .cbx { border: 1px solid #888; background: #fff; display: flex; align-items: center; justify-content: center; }
.fn { width: 168.500px; margin-left: 2.500px; flex: none; letter-spacing: -0.360px; }
.fd { color: #858585; letter-spacing: -0.340px; }
.hs { height: 12px; margin-top: .400px; background: #f0f0f0; display: flex; align-items: center; padding: 0 2px; color: #555; gap: 3px; }
.htrack { flex: 1; height: 12px; display: flex; }
.htrack i { width: 190px; background: #cbcbcb; }
.flip { transform: scaleX(-1); }
.flipv { transform: scaleY(-1); }
.vs { width: 12px; height: 600px; background: #f0f0f0; display: flex; flex-direction: column; align-items: center; padding: 2px 0; color: #555; }
.vtrack { flex: 1; width: 12px; padding-top: 98px; }
.vtrack i { display: block; height: 480px; background: #cbcbcb; }

footer { height: 17px; display: flex; align-items: center; color: #666; }
.cnt { margin: 0 15.500px 0 10px; }
.views { margin-left: auto; display: flex; align-items: center; height: 17px; }
.v { width: 16px; height: 17px; display: flex; align-items: center; justify-content: center; }
.user .v { background: #cbe9f5; border: 1px solid #84c5de; }
.v2 { width: 16px; display: flex; justify-content: center; margin-right: 5px; }
.vl { width: 12px; height: 10px; }
.vp { width: 11px; height: 11px; }

.dialog { position: absolute; left: 0; top: 184px; width: 168px; height: 219.500px; background: #fff; border: solid #8e8e8e; border-width: 1px 1px 1px 0; box-shadow: 0 2px 8px rgba(0, 0, 0, .35); z-index: 1; }
.dcaps { display: flex; gap: 25px; padding: 6px 0 0 74px; color: #b5b5b5; }
.dim { color: #e8e8e8; }
.dark { color: #909090; }
.dialog p { margin: 0; }
.dialog .to { padding-top: 14px; margin-left: -2px; color: #5f7bb0; letter-spacing: -0.200px; }
.ctl { display: flex; align-items: center; height: 16px; margin-top: 1px; padding-left: 103px; }
.pause { width: 6px; height: 7px; border: solid #222; border-width: 0 1.500px; }
.stop { width: 9px; height: 9px; margin-left: 27px; color: #222; }
.graph { width: 147px; height: 59px; margin-top: 5px; border: solid #b5b5b5; border-width: 1px 1px 2px 0; padding-right: 3px; display: flex; align-items: flex-end; justify-content: flex-end; background-color: #fefffc; background-image: linear-gradient(90deg, transparent 28px, #e6efe4 28px), linear-gradient(transparent 9px, #dcf1e1 9px); background-size: 29.400px 100%, 100% 10px; color: #333; line-height: 14px; letter-spacing: -0.280px; }
.dialog .jpg { padding-top: 8px; margin-left: -1px; letter-spacing: -0.200px; }
.dfoot { border-top: 1px solid #e6e6e6; margin-top: 34px; }

.taskbar { height: 23px; display: flex; background: linear-gradient(90deg, #43302d, #3c3431 30%, #46352f 50%, #4b332b 75%, #443d3b 90%, #404448); }
.start { width: 27px; display: flex; align-items: center; justify-content: center; background: #3e2b2c; }
.tsearch { width: 193px; margin-right: 1px; background: #f1f1f1; display: flex; align-items: center; font-size: 11.500px; letter-spacing: -0.250px; color: #555; gap: 7px; padding-left: 8px; }
.tmag { width: 14px; height: 14px; color: #444; }
.app { width: 27.700px; display: flex; align-items: center; justify-content: center; flex: none; }
.app.explorer { background: #7b726b; border-bottom: 3px solid #5df23c; width: 26px; margin: 0 1px 0 .700px; padding-top: 3px; }
.app.obs { border-bottom: 3px solid #aaa5a2; width: 20px; margin-left: 3.500px; padding-top: 3px; }
.tray { margin-left: auto; display: flex; align-items: center; color: #f4f4f4; letter-spacing: -0.100px; }
.ti { width: 18.100px; display: flex; justify-content: center; }
.eng { width: 26px; text-align: center; }
.clock { width: 47px; text-align: center; }
.note { width: 14px; height: 14px; margin-left: 8px; }
.peek { width: 1px; height: 23px; background: #6a6a6a; margin: 0 4px 0 12px; }
</style>
